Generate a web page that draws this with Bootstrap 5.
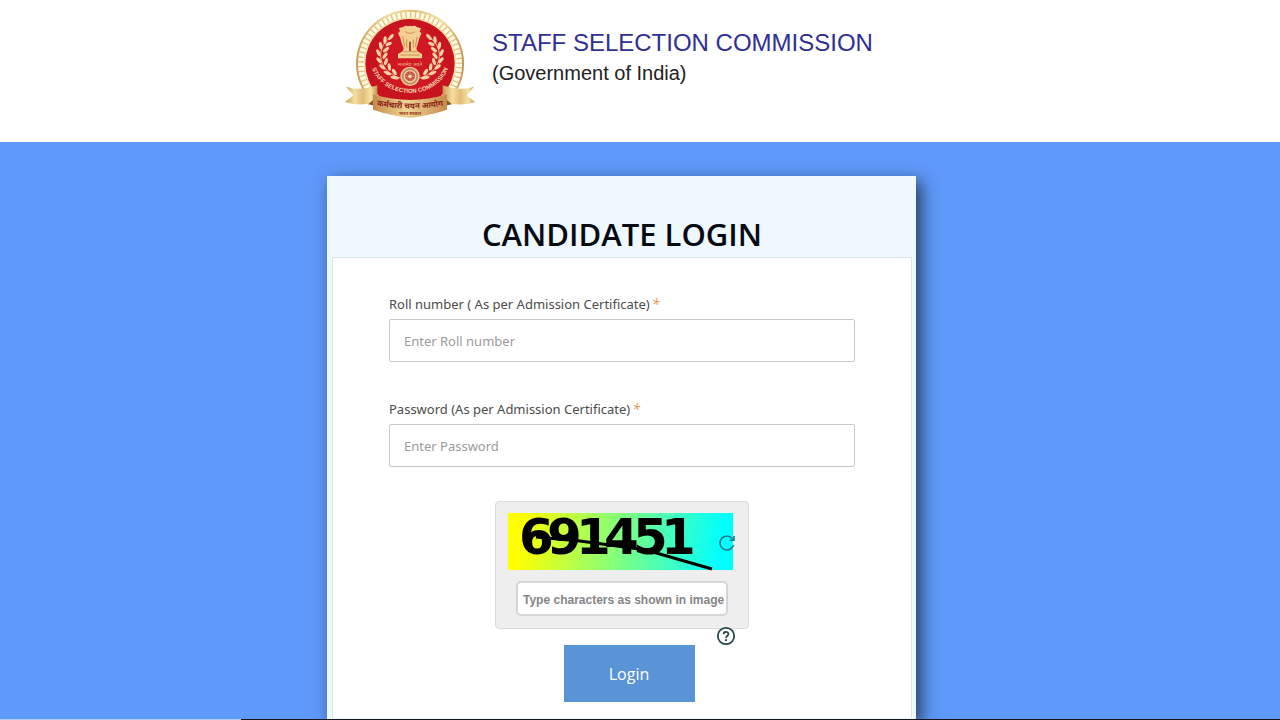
<!DOCTYPE html>
<html lang="en">
<head>
<meta charset="utf-8">
<meta name="viewport" content="width=device-width, initial-scale=1">
<title>Staff Selection Commission - Candidate Login</title>
<link href="https://cdn.jsdelivr.net/npm/bootstrap@5.3.0/dist/css/bootstrap.min.css" rel="stylesheet">
<style>
  body { font-family: "Open Sans", "Noto Sans", sans-serif; background: #fff; }
  .page-wrap { padding-right: 37px; }
  .page-col { max-width: 589px; }
  .site-header { height: 142px; padding-top: 9px; }
  .site-brand { padding-left: 17px; gap: 16px; }
  .brand-text { font-family: "Liberation Sans", Arial, sans-serif; padding-top: 18px; }
  .brand-name { font-size: 24px; line-height: 32px; color: #2f2f95; font-weight: 400; margin: 0; }
  .brand-sub { font-size: 20px; line-height: 28px; color: #222; margin: 0; }
  .login-area { background: #5f99fa; padding-top: 34px; overflow: hidden; }
  .login-card { background: #eff7ff; padding: 0 4px 0 5px; box-shadow: 5px 6px 16px 0 rgba(20, 25, 35, .75); }
  .login-title { font-size: 31px; line-height: 44px; font-weight: 600; color: #060a12; margin: 0; padding: 36px 0 1px; }
  .login-panel { background: #fefffe; border: 1px solid #dbe2e6; border-bottom: 0; padding: 36px 56px 16px; }
  .login-label { display: block; font-family: "Noto Sans", "Open Sans", sans-serif; font-size: 13px; line-height: 20px; margin-bottom: 5px; color: #4c4c4c; }
  .req-star { color: #e8964e; font-size: 14px; font-style: italic; line-height: 1; padding-left: 2px; }
  .login-input { height: 43px; font-family: "Noto Sans", "Open Sans", sans-serif; font-size: 13px; border: 1px solid #c6c9cc; border-radius: 2px; padding: 0 14px; }
  .login-input::placeholder { color: #9b9b9b; }
  .field-group { margin-bottom: 37px; }
  .captcha-box { width: 254px; height: 128px; background: #eeeeef; border: 1px solid #dcdcde; border-radius: 4px; padding: 11px 12px; margin-top: 34px; }
  .captcha-img { display: block; width: 225px; height: 57px; overflow: visible; }
  .captcha-input { width: 212px; height: 35px; margin: 11px 0 0 8px; padding: 3px 0 0 5px; border: 2px solid #d5d5d8; border-radius: 5px; font: bold 12px "Liberation Sans", Arial, sans-serif; }
  .captcha-input::placeholder { color: #858585; }
  .icon-btn { background: none; border: 0; padding: 0; line-height: 0; position: absolute; }
  .refresh-btn { right: 12px; top: 32px; }
  .help-btn { right: 12px; bottom: -18px; }
  .login-btn { width: 131px; height: 57px; margin: 16px 0 0 14px; font-size: 16px; border-radius: 0; color: #fff; background: #5994d7; border: 0; }
  .login-btn:hover { color: #fff; background: #4a85c8; }
  .bottom-rule { height: 1px; background: linear-gradient(90deg, #b4cbf5 18.8%, #15171c 18.8%); }
</style>
</head>
<body class="d-flex flex-column min-vh-100">
<header class="site-header page-wrap">
  <div class="page-col mx-auto">
    <div class="site-brand d-flex align-items-start">
      <svg class="flex-shrink-0" width="132" height="112" viewBox="12 14 396 336" role="img" aria-label="Staff Selection Commission emblem">
        <defs>
          <linearGradient id="gold" x1="0" x2="1"><stop offset="0" stop-color="#c89b52"/><stop offset=".3" stop-color="#f4dfa2"/><stop offset=".55" stop-color="#e2bd78"/><stop offset=".8" stop-color="#f5e2a6"/><stop offset="1" stop-color="#c4914b"/></linearGradient>
          <linearGradient id="band" x1="0" x2="1"><stop offset="0" stop-color="#c58a4c"/><stop offset=".45" stop-color="#f1d596"/><stop offset="1" stop-color="#c68b4c"/></linearGradient>
          <path id="arc" d="M90 160A120 106 0 0 0 330 160"/>
          <path id="ribbonArc" d="M106 303Q210 323 314 303"/>
          <g id="laurel">
            <path d="M151 99C102 135 116 205 184 222" fill="none" stroke="#e9b989" stroke-width="3"/>
            <g fill="#f3d2a4">
              <ellipse cx="153" cy="98" rx="11" ry="5" transform="rotate(-48 153 98)"/>
              <ellipse cx="135" cy="107" rx="11" ry="5" transform="rotate(-85 135 107)"/><ellipse cx="146" cy="119" rx="10" ry="5" transform="rotate(-25 146 119)"/>
              <ellipse cx="122" cy="124" rx="11" ry="5" transform="rotate(80 122 124)"/><ellipse cx="138" cy="136" rx="11" ry="5" transform="rotate(-40 138 136)"/>
              <ellipse cx="115" cy="145" rx="11" ry="5" transform="rotate(68 115 145)"/><ellipse cx="135" cy="154" rx="11" ry="5" transform="rotate(-55 135 154)"/>
              <ellipse cx="117" cy="168" rx="11" ry="5" transform="rotate(52 117 168)"/><ellipse cx="138" cy="172" rx="11" ry="5" transform="rotate(-75 138 172)"/>
              <ellipse cx="127" cy="188" rx="11" ry="5" transform="rotate(38 127 188)"/><ellipse cx="148" cy="188" rx="11" ry="5" transform="rotate(80 148 188)"/>
              <ellipse cx="142" cy="206" rx="12" ry="5" transform="rotate(24 142 206)"/><ellipse cx="163" cy="203" rx="11" ry="5" transform="rotate(58 163 203)"/>
              <ellipse cx="164" cy="220" rx="13" ry="5" transform="rotate(12 164 220)"/>
            </g>
          </g>
        </defs>
        <circle cx="210" cy="178" r="162" fill="url(#gold)"/>
        <circle cx="210" cy="178" r="156" fill="#e4c27e"/>
        <circle cx="210" cy="178" r="147" fill="none" stroke="#fffbe4" stroke-width="18" stroke-dasharray="10 4.2"/>
        <circle cx="210" cy="178" r="138" fill="#f6e3ae"/>
        <circle cx="210" cy="178" r="134" fill="#c7141f"/>
        <circle cx="210" cy="165" r="99" fill="#cf1822"/>
        <use href="#laurel"/>
        <use href="#laurel" transform="matrix(-1 0 0 1 420 0)"/>
        <path d="M190 68Q196 61 205 66Q210 62 215 66Q225 61 230 68L243 72L239 82L245 87L238 101L234 116L229 132L232 141L246 149V162H174V149L188 141L191 132L184 114L181 101L174 87L180 81L177 71Z" fill="#f3cf91"/>
        <path d="M195 82Q210 92 225 82M188 96L194 127M232 96L226 127M200 105V130M220 105V130M181 152H239M191 142H230" fill="none" stroke="#cc9254" stroke-width="3"/>
        <path d="M207 112H213V140H207Z" fill="#a94b2c"/>
        <text x="210" y="184" text-anchor="middle" font-family="Noto Sans, sans-serif" font-size="15" fill="#efb07b">सत्यमेव जयते</text>
        <circle cx="210" cy="216" r="27" fill="#c58a61" stroke="#f2cd9b" stroke-width="4"/>
        <circle cx="210" cy="216" r="17" fill="#bb473b" stroke="#f4d2a5" stroke-width="4"/>
        <path d="M210 199V233M193 216H227M198 204L222 228M222 204L198 228" stroke="#edc18f" stroke-width="2"/>
        <circle cx="210" cy="216" r="5" fill="#f8dfb0"/>
        <text font-family="Liberation Sans, Arial, sans-serif" font-size="18" font-weight="700" fill="#f7d9b0"><textPath href="#arc" startOffset="50%" text-anchor="middle">STAFF SELECTION COMMISSION</textPath></text>
        <path d="M18 247Q64 262 112 243V291Q64 309 15 293L40 273Z" fill="url(#gold)"/>
        <path d="M402 247Q356 262 308 243V291Q356 309 405 293L380 273Z" fill="url(#gold)"/>
        <path d="M84 300L112 277L105 304ZM336 300L308 277L315 304Z" fill="#8b5527"/>
        <path d="M99 270Q155 287 210 287Q265 287 321 270V316Q265 336 210 336Q155 336 99 316Z" fill="url(#band)"/>
        <text font-family="Noto Sans, sans-serif" font-size="24" font-weight="700" fill="#8c2419"><textPath href="#ribbonArc" startOffset="50%" text-anchor="middle">कर्मचारी चयन आयोग</textPath></text>
        <text x="210" y="331" text-anchor="middle" font-family="Noto Sans, sans-serif" font-size="13" font-weight="700" fill="#9b3a20">भारत सरकार</text>
      </svg>
      <div class="brand-text">
        <h1 class="brand-name">STAFF SELECTION COMMISSION</h1>
        <p class="brand-sub">(Government of India)</p>
      </div>
    </div>
  </div>
</header>

<main class="login-area page-wrap flex-grow-1 d-flex flex-column">
  <div class="login-card page-col w-100 mx-auto flex-grow-1">
    <h2 class="login-title text-center">CANDIDATE LOGIN</h2>
    <form class="login-panel">
      <div class="field-group">
        <label class="login-label" for="roll">Roll number ( As per Admission Certificate)<span class="req-star">*</span></label>
        <input class="form-control login-input" id="roll" type="text" placeholder="Enter Roll number">
      </div>
      <div>
        <label class="login-label" for="pass">Password (As per Admission Certificate)<span class="req-star">*</span></label>
        <input class="form-control login-input" id="pass" type="password" placeholder="Enter Password">
      </div>
      <div class="captcha-box position-relative mx-auto">
        <svg class="captcha-img" viewBox="0 0 225 57" role="img" aria-label="Captcha">
          <defs><linearGradient id="cap" gradientUnits="userSpaceOnUse" x1="0" y1="10" x2="220" y2="40"><stop offset=".06" stop-color="#ff0"/><stop offset=".5" stop-color="#83ff7c"/><stop offset=".97" stop-color="#0ff"/></linearGradient></defs>
          <rect width="225" height="57" fill="url(#cap)"/>
          <text x="11 39 68 96 125 153" y="41" font-family="DejaVu Sans, sans-serif" font-weight="700" font-size="50">691451</text>
          <path d="M28 24L72 28L138 37L204 56" fill="none" stroke="#000" stroke-width="3"/>
        </svg>
        <button class="icon-btn refresh-btn" type="button" aria-label="Refresh captcha">
          <svg width="18" height="18" viewBox="0 0 18 18" fill="none" stroke="#157a86" stroke-width="1.6"><path d="M15.6 11.2A7 7 0 1 1 14.6 4.8M16 2V6.3H11.8"/></svg>
        </button>
        <input class="captcha-input form-control" type="text" aria-label="Captcha text" placeholder="Type characters as shown in image">
        <button class="icon-btn help-btn" type="button" aria-label="Help">
          <svg width="20" height="20" viewBox="0 0 20 20"><circle cx="10" cy="10" r="8.2" fill="#fff" stroke="#26474c" stroke-width="1.8"/><path d="M7.6 8.2C7.6 5.1 12.4 5.1 12.4 8C12.4 9.8 10 9.7 10 12" fill="none" stroke="#26474c" stroke-width="1.7"/><circle cx="10" cy="14.2" r="1.1" fill="#26474c"/></svg>
        </button>
      </div>
      <div class="text-center">
        <button class="btn login-btn" type="submit">Login</button>
      </div>
    </form>
  </div>
</main>
<div class="bottom-rule"></div>
<script src="https://cdn.jsdelivr.net/npm/bootstrap@5.3.0/dist/js/bootstrap.bundle.min.js"></script>
</body>
</html>
